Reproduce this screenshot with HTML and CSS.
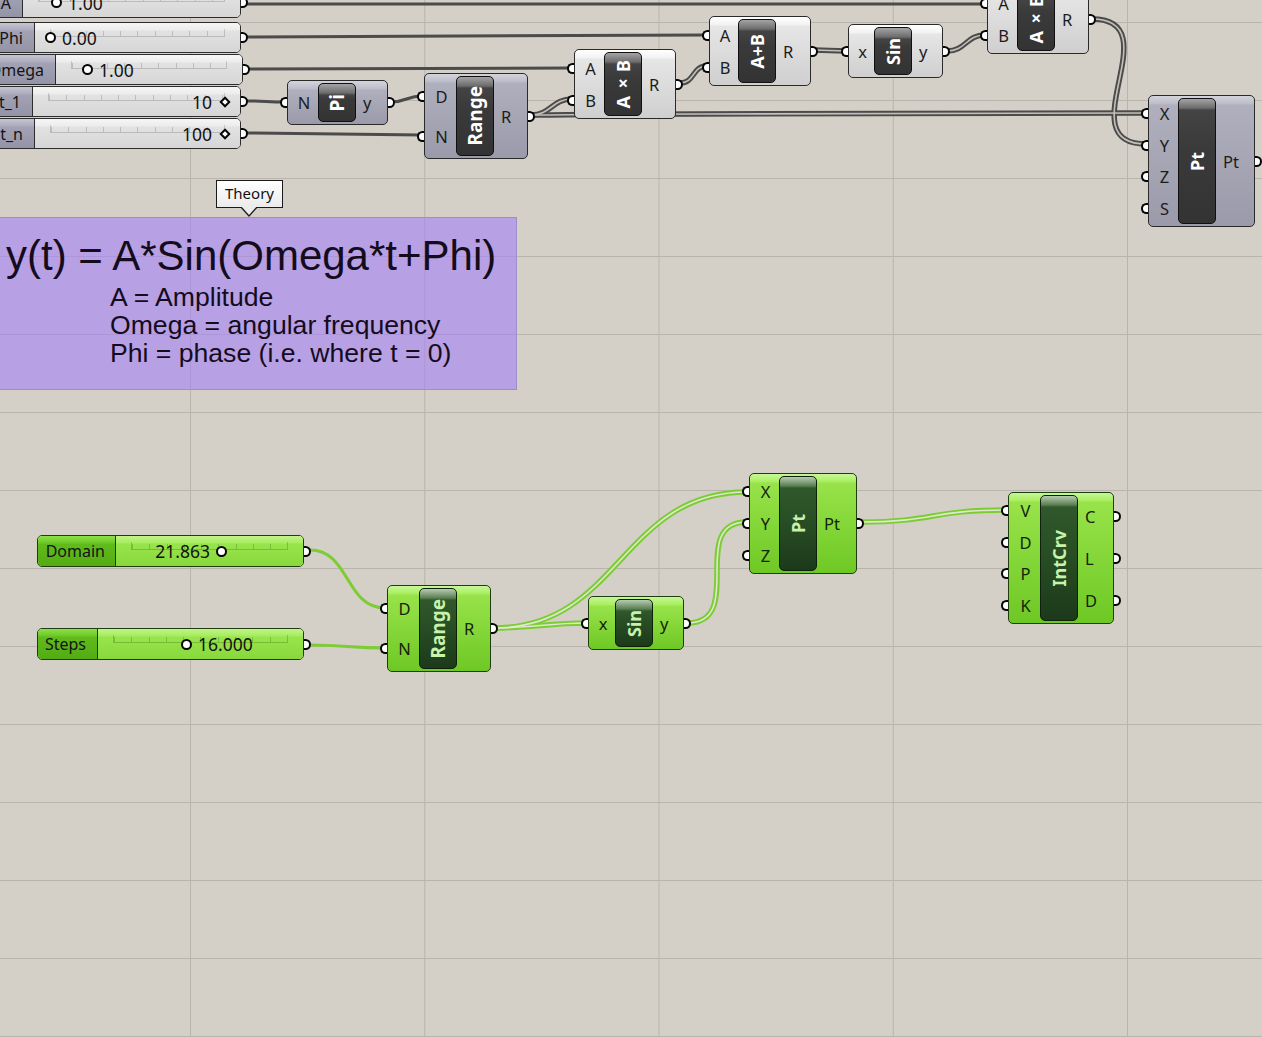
FILE: index.html
```html
<!DOCTYPE html>
<html>
<head>
<meta charset="utf-8">
<link rel="stylesheet" href="styles.css">
</head>
<body>
<div class="canvas">
  <svg class="wires" width="1262" height="1037" viewBox="0 0 1262 1037">
    <g class="gs1">
      <path d="M247,4 L985,4"/>
      <path d="M247,37 L707,35"/>
      <path d="M247,69 L572,68"/>
      <path d="M247,101 C265,101 267,102 285,102"/>
      <path d="M247,133 L422,135"/>
      <path d="M391,102 C406,102 407,96 422,96"/>
    </g>
    <g class="gd-o">
      <path d="M531,115 C551,115 552,99 572,99"/>
      <path d="M531,115 C560,115 600,114 700,114 L1146,113"/>
      <path d="M680,83 C695,83 692,66 707,66"/>
      <path d="M814,50 L846,51"/>
      <path d="M947,51 C966,51 966,35 985,35"/>
      <path d="M1092,19 C1172,19 1066,144 1146,144"/>
    </g>
    <g class="gd-i">
      <path d="M531,115 C551,115 552,99 572,99"/>
      <path d="M531,115 C560,115 600,114 700,114 L1146,113"/>
      <path d="M680,83 C695,83 692,66 707,66"/>
      <path d="M814,50 L846,51"/>
      <path d="M947,51 C966,51 966,35 985,35"/>
      <path d="M1092,19 C1172,19 1066,144 1146,144"/>
    </g>
    <g class="ns1">
      <path d="M310,550 C350,550 345,608 385,608"/>
      <path d="M310,645 C345,645 350,648 385,648"/>
    </g>
    <g class="nd-o">
      <path d="M494,628 C530,628 550,623 586,623"/>
      <path d="M494,628 C620,628 621,492 747,492"/>
      <path d="M687,623 C747,623 687,522 747,522"/>
      <path d="M860,522 C935,522 931,510 1006,510"/>
    </g>
    <g class="nd-i">
      <path d="M494,628 C530,628 550,623 586,623"/>
      <path d="M494,628 C620,628 621,492 747,492"/>
      <path d="M687,623 C747,623 687,522 747,522"/>
      <path d="M860,522 C935,522 931,510 1006,510"/>
    </g>
  </svg>

  <!-- Theory panel -->
  <div class="panel">
    <div class="panel-title">y(t) = A*Sin(Omega*t+Phi)</div>
    <div class="panel-lines">
      <div>A = Amplitude</div>
      <div>Omega = angular frequency</div>
      <div>Phi = phase (i.e. where t = 0)</div>
    </div>
  </div>
  <div class="bubble">Theory</div>

  <!-- Top sliders -->
  <div class="slider sg s-a">
    <div class="slabel">A</div>
    <div class="sbody"><div class="track"></div><div class="val v-a"><span class="grip"></span><span>1.00</span></div></div>
    <span class="nub out"></span>
  </div>
  <div class="slider sg s-phi">
    <div class="slabel">Phi</div>
    <div class="sbody"><div class="track"></div><div class="val v-phi"><span class="grip"></span><span>0.00</span></div></div>
    <span class="nub out"></span>
  </div>
  <div class="slider sg s-omega">
    <div class="slabel">Omega</div>
    <div class="sbody"><div class="track"></div><div class="val v-omega"><span class="grip"></span><span>1.00</span></div></div>
    <span class="nub out"></span>
  </div>
  <div class="slider sg s-t1">
    <div class="slabel">t_1</div>
    <div class="sbody"><div class="track"></div><div class="val v-int"><span>10</span><span class="diamond"></span></div></div>
    <span class="nub out"></span>
  </div>
  <div class="slider sg s-tn">
    <div class="slabel">t_n</div>
    <div class="sbody"><div class="track"></div><div class="val v-int"><span>100</span><span class="diamond"></span></div></div>
    <span class="nub out"></span>
  </div>

  <!-- Top components -->
  <div class="comp cd n-pi">
    <div class="ins"><div class="port">N<span class="nub in"></span></div></div>
    <div class="cap"><span>Pi</span></div>
    <div class="outs"><div class="port">y<span class="nub out"></span></div></div>
  </div>
  <div class="comp cd n-range1">
    <div class="ins"><div class="port">D<span class="nub in"></span></div><div class="port">N<span class="nub in"></span></div></div>
    <div class="cap"><span>Range</span></div>
    <div class="outs"><div class="port">R<span class="nub out"></span></div></div>
  </div>
  <div class="comp cl n-axb1">
    <div class="ins"><div class="port">A<span class="nub in"></span></div><div class="port">B<span class="nub in"></span></div></div>
    <div class="cap"><span>A×B</span></div>
    <div class="outs"><div class="port">R<span class="nub out"></span></div></div>
  </div>
  <div class="comp cl n-apb">
    <div class="ins"><div class="port">A<span class="nub in"></span></div><div class="port">B<span class="nub in"></span></div></div>
    <div class="cap"><span>A+B</span></div>
    <div class="outs"><div class="port">R<span class="nub out"></span></div></div>
  </div>
  <div class="comp cl n-sin1">
    <div class="ins"><div class="port">x<span class="nub in"></span></div></div>
    <div class="cap"><span>Sin</span></div>
    <div class="outs"><div class="port">y<span class="nub out"></span></div></div>
  </div>
  <div class="comp cl n-axb2">
    <div class="ins"><div class="port">A<span class="nub in"></span></div><div class="port">B<span class="nub in"></span></div></div>
    <div class="cap"><span>A×B</span></div>
    <div class="outs"><div class="port">R<span class="nub out"></span></div></div>
  </div>
  <div class="comp cd n-pt1">
    <div class="ins">
      <div class="port">X<span class="nub in"></span></div>
      <div class="port">Y<span class="nub in"></span></div>
      <div class="port">Z<span class="nub in"></span></div>
      <div class="port">S<span class="nub in"></span></div>
    </div>
    <div class="cap"><span>Pt</span></div>
    <div class="outs"><div class="port">Pt<span class="nub out"></span></div></div>
  </div>

  <!-- Bottom sliders -->
  <div class="slider sn s-domain">
    <div class="slabel">Domain</div>
    <div class="sbody"><div class="track"></div><div class="val v-domain"><span>21.863</span><span class="grip"></span></div></div>
    <span class="nub out"></span>
  </div>
  <div class="slider sn s-steps">
    <div class="slabel">Steps</div>
    <div class="sbody"><div class="track"></div><div class="val v-steps"><span class="grip"></span><span>16.000</span></div></div>
    <span class="nub out"></span>
  </div>

  <!-- Bottom components -->
  <div class="comp cn n-range2">
    <div class="ins"><div class="port">D<span class="nub in"></span></div><div class="port">N<span class="nub in"></span></div></div>
    <div class="cap"><span>Range</span></div>
    <div class="outs"><div class="port">R<span class="nub out"></span></div></div>
  </div>
  <div class="comp cn n-sin2">
    <div class="ins"><div class="port">x<span class="nub in"></span></div></div>
    <div class="cap"><span>Sin</span></div>
    <div class="outs"><div class="port">y<span class="nub out"></span></div></div>
  </div>
  <div class="comp cn n-pt2">
    <div class="ins">
      <div class="port">X<span class="nub in"></span></div>
      <div class="port">Y<span class="nub in"></span></div>
      <div class="port">Z<span class="nub in"></span></div>
    </div>
    <div class="cap"><span>Pt</span></div>
    <div class="outs"><div class="port">Pt<span class="nub out"></span></div></div>
  </div>
  <div class="comp cn n-intcrv">
    <div class="ins">
      <div class="port">V<span class="nub in"></span></div>
      <div class="port">D<span class="nub in"></span></div>
      <div class="port">P<span class="nub in"></span></div>
      <div class="port">K<span class="nub in"></span></div>
    </div>
    <div class="cap"><span>IntCrv</span></div>
    <div class="outs">
      <div class="port">C<span class="nub out"></span></div>
      <div class="port">L<span class="nub out"></span></div>
      <div class="port">D<span class="nub out"></span></div>
    </div>
  </div>
</div>
</body>
</html>
```

FILE: styles.css
```css
html, body {
  margin: 0;
  padding: 0;
}
body {
  background: #d4d0c8;
  font-family: "Noto Sans", "Open Sans", sans-serif;
}
.canvas {
  position: relative;
  width: 1262px;
  height: 1037px;
  overflow: hidden;
  background-color: #d4d0c8;
  background-image:
    linear-gradient(to right, #b9b5ad 1px, transparent 1px),
    linear-gradient(to bottom, #b9b5ad 1px, transparent 1px);
  background-size: 234.25px 78px, 234.25px 78px;
  background-position: 190px 0, 0 22px;
}

/* wires */
.wires {
  position: absolute;
  left: 0;
  top: 0;
  z-index: 0;
}
.wires path {
  fill: none;
  stroke-linecap: round;
}
.gs1 path { stroke: #4b4b4b; stroke-width: 3; }
.gd-o path { stroke: #4b4b4b; stroke-width: 5.5; }
.gd-i path { stroke: #c4c0b8; stroke-width: 1.6; }
.ns1 path { stroke: #7ccd33; stroke-width: 3; }
.nd-o path { stroke: #7ccd33; stroke-width: 5.5; }
.nd-i path { stroke: #dfe6d2; stroke-width: 1.6; }

/* theory panel */
.panel {
  position: absolute;
  left: -2px;
  top: 217px;
  width: 519px;
  height: 173px;
  box-sizing: border-box;
  background: rgba(165, 128, 247, 0.6);
  border: 1px solid #9f8ccb;
  padding: 14px 0 0 7px;
  font-family: "Liberation Sans", Arial, sans-serif;
  color: #140c1c;
  z-index: 1;
}
.panel-title {
  font-size: 42px;
  line-height: 48px;
  white-space: nowrap;
}
.panel-lines {
  margin: 3px 0 0 104px;
  font-size: 26.6px;
  line-height: 28px;
  white-space: nowrap;
}
.bubble {
  position: absolute;
  left: 216px;
  top: 180px;
  width: 67px;
  height: 28px;
  box-sizing: border-box;
  border: 1px solid #1a1a1a;
  background: linear-gradient(#ffffff, #ebebeb);
  font-size: 15px;
  line-height: 25px;
  text-align: center;
  color: #111;
  z-index: 3;
}
.bubble::before {
  content: "";
  position: absolute;
  left: 23px;
  top: 26px;
  border-left: 9px solid transparent;
  border-right: 9px solid transparent;
  border-top: 10px solid #1a1a1a;
}
.bubble::after {
  content: "";
  position: absolute;
  left: 24px;
  top: 25px;
  border-left: 8px solid transparent;
  border-right: 8px solid transparent;
  border-top: 9px solid #ececec;
}

/* nubs */
.nub {
  position: absolute;
  top: 50%;
  width: 7px;
  height: 11px;
  margin-top: -5.5px;
  box-sizing: border-box;
  background: #fff;
  border: 2.5px solid #050505;
}
.nub.in {
  left: -8px;
  border-right: none;
  border-radius: 6px 0 0 6px;
}
.nub.out {
  right: -8px;
  border-left: none;
  border-radius: 0 6px 6px 0;
}

/* sliders */
.slider {
  position: absolute;
  display: flex;
  box-sizing: border-box;
  border: 1px solid #2c2c2c;
  border-radius: 5px;
  z-index: 2;
}
.slabel {
  flex: none;
  box-sizing: border-box;
  display: flex;
  align-items: center;
  justify-content: flex-end;
  padding-right: 11px;
  border-right: 1px solid #2c2c2c;
  border-radius: 4px 0 0 4px;
  font-size: 16px;
  color: #141414;
  white-space: nowrap;
  overflow: hidden;
}
.sbody {
  position: relative;
  flex: 1;
  border-radius: 0 4px 4px 0;
}
.sg .slabel {
  background: linear-gradient(#c4c4d2 0, #acacbe 7px, #a2a2b4 8px, #9494a8 100%);
}
.sg .sbody {
  background: linear-gradient(#f6f6f6 0, #ececec 7px, #e2e2e2 8px, #d6d6d6 100%);
}
.sn .slabel {
  background: linear-gradient(#8fe04a 0, #6cc826 7px, #60bb1c 8px, #54ab14 100%);
  border-right-color: #1f3e10;
}
.sn {
  border-color: #1f3e10;
}
.sn .sbody {
  background: linear-gradient(#c2f48a 0, #a6ec5e 7px, #98e44c 8px, #88d83c 100%);
}
.track {
  position: absolute;
  left: 15px;
  right: 15px;
  top: 6px;
  height: 8px;
  box-sizing: border-box;
  border: 1px solid rgba(0, 0, 0, 0.16);
  border-top: none;
  background: repeating-linear-gradient(to right, rgba(0, 0, 0, 0.16) 0 1px, transparent 1px 17.3px);
  background-size: 100% 5px;
  background-repeat: no-repeat;
  background-position: 0 100%;
}
.sn .track {
  border-color: rgba(30, 80, 0, 0.25);
  background-image: repeating-linear-gradient(to right, rgba(30, 80, 0, 0.25) 0 1px, transparent 1px 17.3px);
}
.val {
  position: absolute;
  top: 0;
  bottom: 0;
  display: flex;
  align-items: center;
  gap: 6px;
  font-size: 17.5px;
  color: #111;
  white-space: nowrap;
}
.grip {
  display: inline-block;
  width: 11px;
  height: 11px;
  box-sizing: border-box;
  border: 2.5px solid #050505;
  border-radius: 50%;
  background: #fff;
}
.diamond {
  display: inline-block;
  width: 8px;
  height: 8px;
  margin: 0 2px 0 3px;
  box-sizing: border-box;
  border: 2px solid #050505;
  background: #fff;
  transform: rotate(45deg);
}
.v-a { left: 28px; }
.v-phi { left: 10px; }
.v-omega { left: 26px; }
.v-int { right: 9px; }
.v-domain { right: 76px; }
.v-steps { left: 83px; }

.s-a { left: -30px; top: -13px; width: 271px; height: 31px; }
.s-a .slabel { width: 52px; }
.s-phi { left: -10px; top: 22px; width: 251px; height: 31px; }
.s-phi .slabel { width: 44px; }
.s-omega { left: -30px; top: 54px; width: 273px; height: 31px; }
.s-omega .slabel { width: 85px; }
.s-t1 { left: -10px; top: 86px; width: 251px; height: 31px; }
.s-t1 .slabel { width: 42px; }
.s-tn { left: -10px; top: 118px; width: 251px; height: 31px; }
.s-tn .slabel { width: 44px; }
.s-domain { left: 37px; top: 535px; width: 267px; height: 32px; }
.s-domain .slabel { width: 78px; padding-right: 10px; }
.s-steps { left: 37px; top: 628px; width: 267px; height: 32px; }
.s-steps .slabel { width: 60px; }

/* components */
.comp {
  position: absolute;
  display: flex;
  box-sizing: border-box;
  border: 1px solid #2a2a2a;
  border-radius: 5px;
  z-index: 2;
}
.cd {
  background: linear-gradient(#d4d4de 0, #bcbcc8 8px, #afafbd 9px, #9a9aaa 100%);
}
.cl {
  background: linear-gradient(#ffffff 0, #f2f2f2 8px, #e6e6e6 9px, #cfcfcf 100%);
}
.cn {
  border-color: #1f3e10;
  background: linear-gradient(#c6f79a 0, #a8ee5c 8px, #98e34a 9px, #6ec824 100%);
}
.ins {
  flex: none;
  width: var(--in);
  display: flex;
  flex-direction: column;
  padding: 2px 0;
  box-sizing: border-box;
}
.outs {
  flex: 1;
  display: flex;
  flex-direction: column;
  padding: 2px 0;
  box-sizing: border-box;
}
.port {
  position: relative;
  flex: 1;
  display: flex;
  align-items: center;
  justify-content: center;
  font-size: 16.5px;
  color: #1c1c1c;
}
.outs .port {
  justify-content: flex-start;
  padding-left: 7px;
}
.ins .port {
  padding-left: 2px;
}
.cn .port {
  color: #14240a;
}
.cap {
  flex: none;
  width: 38px;
  margin: 2px 0;
  box-sizing: border-box;
  border: 1px solid #101010;
  border-radius: 5px;
  background: linear-gradient(#a4a4a4 0, #6c6c6c 9px, #444444 11px, #3a3a3a 40%, #333333 100%);
  display: flex;
  align-items: center;
  justify-content: center;
}
.cap span {
  writing-mode: vertical-rl;
  transform: rotate(180deg);
  font-weight: bold;
  font-size: 19px;
  color: #ffffff;
  white-space: nowrap;
  line-height: 1;
}
.cn .cap {
  border-color: #0e200a;
  background: linear-gradient(#b7ccb0 0, #5a7e52 9px, #30582c 11px, #2a5026 40%, #1c3a1a 100%);
}
.cn .cap span {
  color: #c6f2aa;
}

.n-pi { left: 287px; top: 80px; width: 101px; height: 45px; --in: 30px; }
.n-range1 { left: 424px; top: 73px; width: 104px; height: 86px; --in: 31px; }
.n-axb1 { left: 574px; top: 49px; width: 102px; height: 70px; --in: 29px; }
.n-apb { left: 709px; top: 16px; width: 102px; height: 70px; --in: 28px; }
.n-sin1 { left: 848px; top: 24px; width: 95px; height: 54px; --in: 25px; }
.n-axb2 { left: 987px; top: -16px; width: 102px; height: 70px; --in: 29px; }
.n-pt1 { left: 1148px; top: 95px; width: 107px; height: 132px; --in: 29px; }
.n-range2 { left: 387px; top: 585px; width: 104px; height: 87px; --in: 31px; }
.n-sin2 { left: 588px; top: 596px; width: 96px; height: 54px; --in: 26px; }
.n-pt2 { left: 749px; top: 473px; width: 108px; height: 101px; --in: 29px; }
.n-intcrv { left: 1008px; top: 492px; width: 106px; height: 132px; --in: 31px; }

.n-sin1 .cap span, .n-sin2 .cap span,
.n-axb1 .cap span, .n-axb2 .cap span, .n-apb .cap span,
.n-pt1 .cap span, .n-pt2 .cap span, .n-intcrv .cap span {
  font-size: 18px;
}
```
